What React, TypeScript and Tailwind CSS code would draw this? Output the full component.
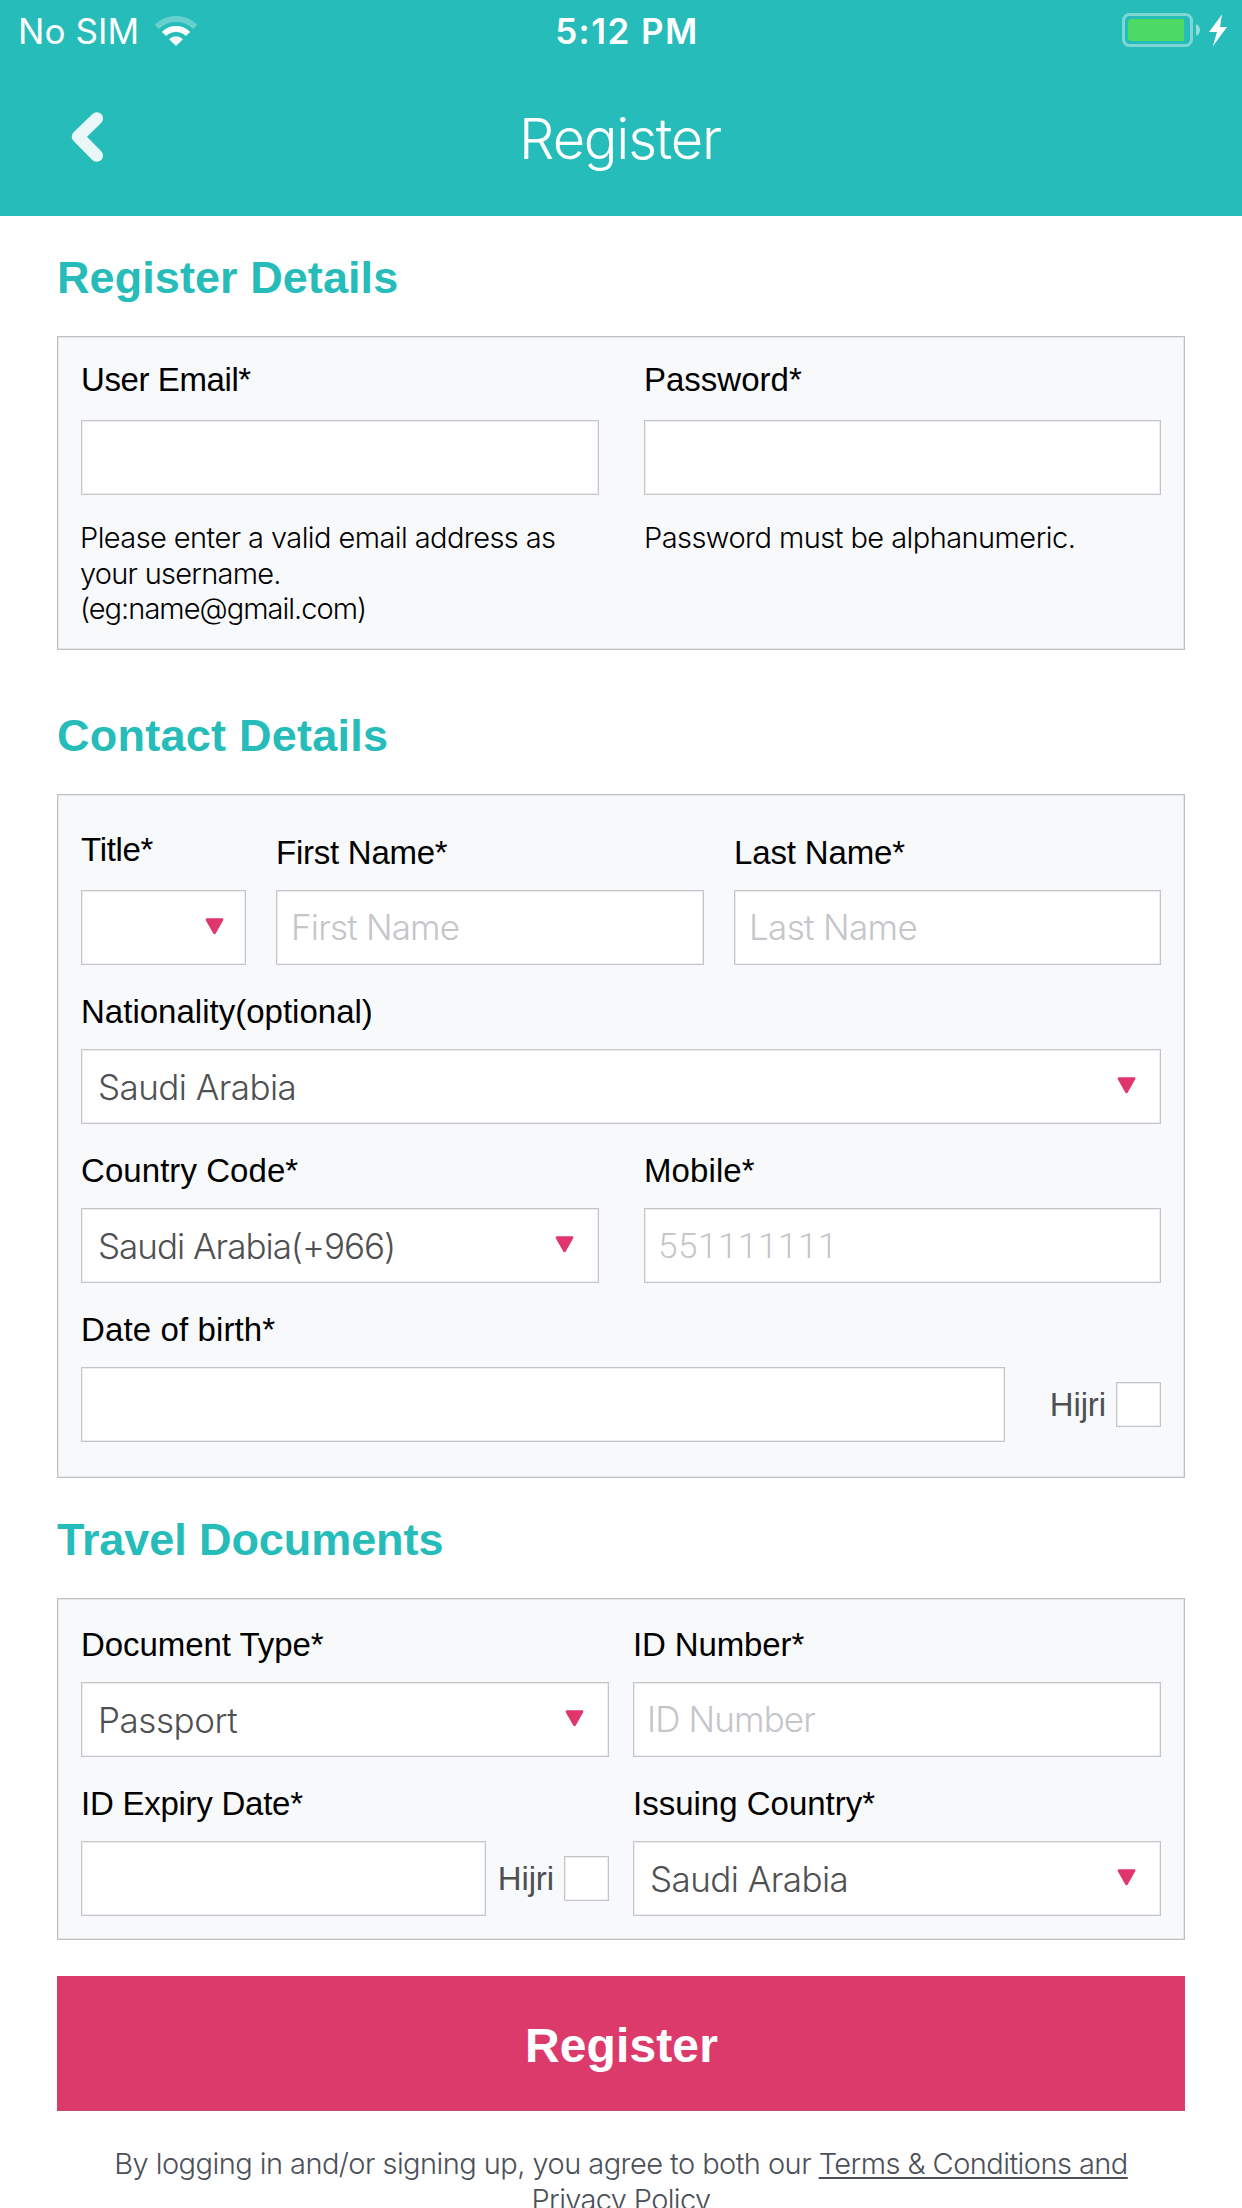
import type { ReactNode } from 'react';

const box = 'border border-[#c4c5c8] bg-white shadow-[inset_0_0_0_1px_#ececee]';
const inter = "font-['Inter','Liberation_Sans',sans-serif] font-light";
const roboto = "font-['Roboto','Liberation_Sans',sans-serif] font-light";

function WifiIcon() {
  return (
    <svg width="42" height="31" viewBox="0 0 42 31" fill="none" stroke="white">
      <path d="M1.9 10.9A27 27 0 0 1 40.1 10.9" strokeWidth="6" opacity="0.3" />
      <path d="M9 18A17 17 0 0 1 33 18" strokeWidth="6" />
      <path d="M14.1 23.2A9.7 9.7 0 0 1 27.9 23.2L21 30Z" fill="white" stroke="none" />
    </svg>
  );
}

function BatteryIcon() {
  return (
    <svg width="106" height="36" viewBox="0 0 106 36" fill="none">
      <rect x="1.5" y="1.5" width="68" height="31" rx="6" stroke="white" strokeOpacity="0.4" strokeWidth="3" />
      <path d="M62 6V28H9.5A3.5 3.5 0 0 1 6 24.5V9.5A3.5 3.5 0 0 1 9.5 6Z" fill="#4cd964" />
      <path d="M74 11C79.3 13 79.3 21 74 23Z" fill="white" fillOpacity="0.5" />
      <path d="M100 1.5L87 19H95L90.7 33.5L105 14H98Z" fill="white" />
    </svg>
  );
}

function Arrow() {
  return (
    <svg width="19" height="17" viewBox="0 0 19 17" className="mb-[2px] shrink-0">
      <path d="M2 1.6H17L9.5 14.9Z" fill="#e0366c" stroke="#e0366c" strokeWidth="2.8" strokeLinejoin="round" />
    </svg>
  );
}

function Heading({ children, className }: { children: ReactNode; className: string }) {
  return <h2 className={`mb-[28px] h-[60px] text-[45px] leading-[60px] font-bold text-[#25bcb9] ${className}`}>{children}</h2>;
}

function Field({ label, labelClass = '', children }: { label: string; labelClass?: string; children: ReactNode }) {
  return (
    <div className="flex flex-col">
      <label className={`mb-[17px] h-[40px] text-[33px] leading-[40px] whitespace-nowrap text-black ${labelClass}`}>{label}</label>
      {children}
    </div>
  );
}

function Input({ placeholder = '', font = inter, className = 'pb-[2px]' }: { placeholder?: string; font?: string; className?: string }) {
  return (
    <input
      placeholder={placeholder}
      className={`h-[75px] w-full min-w-0 rounded-none text-[35px] outline-none placeholder:text-[#c5c5ca] placeholder:opacity-100 ${font} ${box} ${className}`}
    />
  );
}

function Select({ value = '', className = '' }: { value?: string; className?: string }) {
  return (
    <div className={`flex h-[75px] items-center justify-between pr-[24px] pl-[16px] ${box}`}>
      <span className={`text-[35px] leading-[44px] whitespace-nowrap text-[#4f5052] ${inter} ${className}`}>{value}</span>
      <Arrow />
    </div>
  );
}

function Card({ children, className }: { children: ReactNode; className: string }) {
  return <section className={`flex flex-col gap-[27px] border border-[#bfc0c3] bg-[#f8f9fb] px-[23px] shadow-[inset_0_0_0_1px_#e6e7e9] ${className}`}>{children}</section>;
}

export default function App() {
  return (
    <div className="h-[2208px] w-[1242px] overflow-hidden bg-white font-['Liberation_Sans',Arial,sans-serif]">
      <header className="h-[216px] bg-[#25bcb9] text-white">
        <div className="grid h-[62px] grid-cols-3 items-center font-['Inter',sans-serif] text-[35px] leading-[44px]">
          <div className="flex items-center gap-[16px] pl-[18px]">
            <span className="tracking-[0.1px]">No SIM</span>
            <WifiIcon />
          </div>
          <span className="pl-[12px] text-center font-semibold tracking-[1.47px]">5:12 PM</span>
          <div className="flex justify-end pr-[14px]">
            <BatteryIcon />
          </div>
        </div>
        <div className="grid h-[154px] grid-cols-[120px_1fr_120px] items-center">
          <button className="mb-[5px] pl-[71px]" aria-label="Back">
            <svg width="33" height="50" viewBox="0 0 33 50" fill="none" stroke="#e9f7f9" strokeWidth="12.5" strokeLinecap="round" strokeLinejoin="round">
              <path d="M25.8 6.4L7 24.7L25.8 43.6" />
            </svg>
          </button>
          <h1 className={`pr-[2px] text-center text-[56px] leading-[70px] tracking-[-1.25px] ${inter}`}>Register</h1>
        </div>
      </header>

      <main className="px-[57px]">
        <Heading className="mt-[32px] tracking-[0.07px]">Register Details</Heading>
        <Card className="h-[314px] pt-[23px]">
          <div className="grid grid-cols-[518px_517px] gap-[45px]">
            <div>
              <Field label="User Email*" labelClass="mb-[20px] tracking-[-0.4px]">
                <Input />
              </Field>
              <p className={`mt-[25px] -ml-[1px] text-[29px] leading-[35.5px] tracking-[-0.58px] text-black ${inter}`}>
                Please enter a valid email address as
                <br />
                <span className="tracking-[-0.75px]">your username.</span>
                <br />
                <span className="tracking-[-0.98px]">(eg:name@gmail.com)</span>
              </p>
            </div>
            <div>
              <Field label="Password*" labelClass="mb-[20px]">
                <Input />
              </Field>
              <p className={`mt-[25px] text-[29px] leading-[35.5px] tracking-[-0.55px] text-black ${inter}`}>Password must be alphanumeric.</p>
            </div>
          </div>
        </Card>

        <Heading className="mt-[56px] tracking-[0.25px]">Contact Details</Heading>
        <Card className="h-[684px] pt-[38px]">
          <div className="grid grid-cols-[165px_428px_427px] gap-[30px]">
            <Field label="Title*" labelClass="-mt-[3px] mb-[20px] tracking-[-0.3px]">
              <div className={`flex h-[75px] items-center justify-end pr-[21px] ${box}`}>
                <Arrow />
              </div>
            </Field>
            <Field label="First Name*" labelClass="tracking-[-0.25px]">
              <Input placeholder="First Name" className="pb-[2px] pl-[14px] tracking-[-0.8px]" />
            </Field>
            <Field label="Last Name*" labelClass="tracking-[-0.15px]">
              <Input placeholder="Last Name" className="pb-[2px] pl-[14px] tracking-[-0.65px]" />
            </Field>
          </div>
          <Field label="Nationality(optional)" labelClass="tracking-[0.01px]">
            <Select value="Saudi Arabia" className="tracking-[-0.55px]" />
          </Field>
          <div className="grid grid-cols-[518px_517px] gap-[45px]">
            <Field label="Country Code*" labelClass="tracking-[0.06px]">
              <Select value="Saudi Arabia(+966)" className="tracking-[-1px]" />
            </Field>
            <Field label="Mobile*" labelClass="tracking-[0.1px]">
              <Input placeholder="551111111" font={roboto} className="pt-px pl-[13px] tracking-[0.6px]" />
            </Field>
          </div>
          <Field label="Date of birth*" labelClass="tracking-[0.12px]">
            <div className="flex items-center">
              <Input className="max-w-[924px]" />
              <span className="ml-auto pr-[10px] text-[33px] leading-[40px] tracking-[-0.1px] text-[#4f5052]">Hijri</span>
              <div className={`h-[45px] w-[45px] ${box}`} />
            </div>
          </Field>
        </Card>

        <Heading className="mt-[32px] tracking-[-0.08px]">Travel Documents</Heading>
        <Card className="h-[342px] pt-[26px]">
          <div className="grid grid-cols-[528px_528px] gap-[24px]">
            <Field label="Document Type*" labelClass="tracking-[-0.06px]">
              <Select value="Passport" className="tracking-[-0.45px]" />
            </Field>
            <Field label="ID Number*" labelClass="tracking-[-0.12px]">
              <Input placeholder="ID Number" className="pb-[2px] pl-[13px] tracking-[-0.88px]" />
            </Field>
          </div>
          <div className="grid grid-cols-[528px_528px] gap-[24px]">
            <Field label="ID Expiry Date*" labelClass="tracking-[-0.25px]">
              <div className="flex items-center">
                <Input className="max-w-[405px]" />
                <span className="ml-auto pr-[10px] text-[33px] leading-[40px] tracking-[-0.1px] text-[#4f5052]">Hijri</span>
                <div className={`h-[45px] w-[45px] ${box}`} />
              </div>
            </Field>
            <Field label="Issuing Country*">
              <Select value="Saudi Arabia" className="tracking-[-0.55px]" />
            </Field>
          </div>
        </Card>

        <button className="mt-[36px] flex h-[135px] w-full items-center justify-center border-b border-[#c44a72] bg-[#dd3a6c] pt-[6px] pl-px text-[48px] tracking-[0.1px] font-bold text-white">
          Register
        </button>
        <p className={`mt-[35px] text-center text-[29px] leading-[35.5px] tracking-[-0.55px] whitespace-nowrap text-[#4b5058] ${inter}`}>
          By logging in and/or signing up, you agree to both our{' '}
          <a className="underline decoration-2 underline-offset-[3px]">
            Terms &amp; Conditions and
            <br />
            <span className="tracking-[-0.65px]">Privacy Policy</span>
          </a>
        </p>
      </main>
    </div>
  );
}
